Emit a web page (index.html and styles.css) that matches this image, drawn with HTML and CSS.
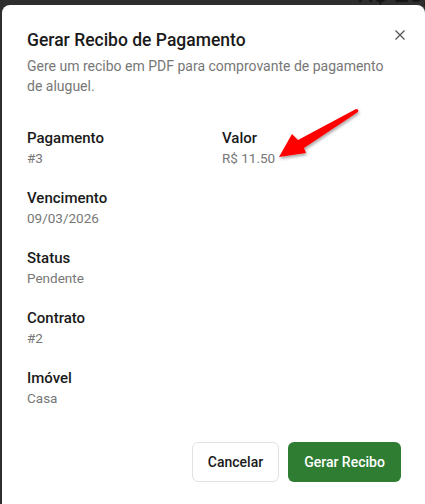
FILE: index.html
```html
<!DOCTYPE html>
<html lang="pt-BR">
<head>
<meta charset="utf-8">
<link rel="stylesheet" href="styles.css">
</head>
<body>
<div class="backdrop-text">R$ 20,</div>
<div class="dialog">
  <button class="close" aria-label="Fechar">
    <svg width="12" height="12" viewBox="0 0 12 12"><path d="M1.5 1.5L10.5 10.5M10.5 1.5L1.5 10.5" stroke="#555" stroke-width="1.3" fill="none"/></svg>
  </button>
  <h2 class="title">Gerar Recibo de Pagamento</h2>
  <p class="desc">Gere um recibo em PDF para comprovante de pagamento de aluguel.</p>
  <div class="grid">
    <div class="item"><div class="label">Pagamento</div><div class="value">#3</div></div>
    <div class="item"><div class="label">Valor</div><div class="value">R$ 11.50</div></div>
    <div class="item full"><div class="label">Vencimento</div><div class="value">09/03/2026</div></div>
    <div class="item full"><div class="label">Status</div><div class="value">Pendente</div></div>
    <div class="item full"><div class="label">Contrato</div><div class="value">#2</div></div>
    <div class="item full"><div class="label">Imóvel</div><div class="value">Casa</div></div>
  </div>
  <div class="actions">
    <button class="btn btn-outline">Cancelar</button>
    <button class="btn btn-primary">Gerar Recibo</button>
  </div>
</div>
<svg class="arrow" width="425" height="504" viewBox="0 0 425 504">
  <defs>
    <filter id="sh" x="-20%" y="-20%" width="140%" height="140%">
      <feDropShadow dx="1" dy="2" stdDeviation="1.5" flood-color="#000" flood-opacity="0.35"/>
    </filter>
  </defs>
  <path d="M279 157 L292 134 L298 140 L356 109 Q359 109 358 112 L304 148 L306 153 Z" fill="#ff0000" filter="url(#sh)"/>
</svg>
</body>
</html>
```
FILE: styles.css
```css
* { box-sizing: border-box; }
html, body { margin: 0; padding: 0; }
body {
  width: 425px;
  height: 504px;
  overflow: hidden;
  background: #2e2e2e;
  font-family: "Roboto", "Noto Sans", sans-serif;
  position: relative;
}
.backdrop-text {
  position: absolute;
  left: 357px;
  top: -22px;
  font-size: 26px;
  line-height: 30px;
  color: #151515;
  white-space: nowrap;
}
.dialog {
  position: relative;
  margin: 5px 0 0 2px;
  width: 423px;
  height: 520px;
  background: #fff;
  border-radius: 8px;
  padding: 23px 24px 0 25px;
}
.close {
  position: absolute;
  top: 23px;
  right: 18px;
  width: 14px;
  height: 14px;
  padding: 0;
  border: 0;
  background: none;
  display: flex;
  align-items: center;
  justify-content: center;
}
.title {
  margin: 0;
  font-size: 17.5px;
  font-weight: 500;
  line-height: 24px;
  color: #1a1a1a;
}
.desc {
  margin: 4px 0 0;
  font-size: 14px;
  line-height: 20px;
  color: #777;
  width: 372px;
}
.grid {
  margin-top: 32px;
  display: grid;
  grid-template-columns: 195px 1fr;
  row-gap: 20px;
}
.item.full { grid-column: 1 / 2; }
.label {
  font-size: 15px;
  line-height: 20px;
  font-weight: 500;
  color: #1a1a1a;
}
.value {
  font-size: 13.5px;
  line-height: 20px;
  color: #777;
}
.actions {
  margin-top: 34px;
  display: flex;
  justify-content: flex-end;
  gap: 9px;
}
.btn {
  height: 40px;
  border-radius: 6px;
  font-family: inherit;
  font-size: 14px;
  font-weight: 500;
  padding: 0;
  white-space: nowrap;
}
.btn-outline {
  width: 87px;
  background: #fff;
  border: 1px solid #e2e2e2;
  color: #1a1a1a;
}
.btn-primary {
  width: 113px;
  background: #2e7d32;
  border: 0;
  color: #fff;
}
.arrow {
  position: absolute;
  left: 0;
  top: 0;
  pointer-events: none;
}
```
